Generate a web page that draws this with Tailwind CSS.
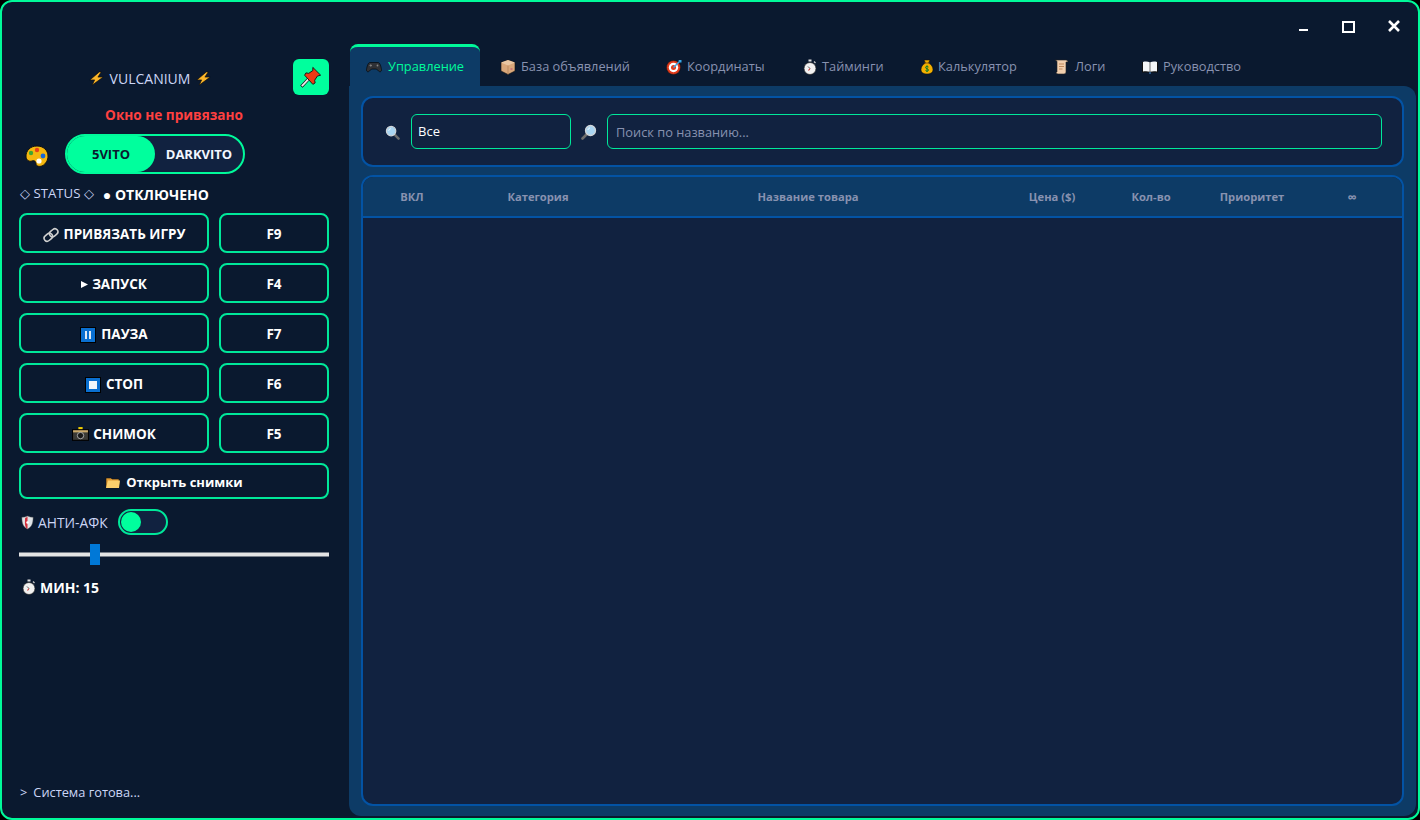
<!doctype html>
<html lang="ru">
<head>
  <meta charset="utf-8" />
  <title>Vulcanium</title>
  <script src="https://cdn.jsdelivr.net/npm/@tailwindcss/browser@4"></script>
</head>
<body class="bg-black">
  <svg class="hidden">
    <symbol id="i-bolt" viewBox="0 0 16 16"><path d="M11 1 1 9.500h5L3.500 15 15 6.500H9.500L13 1z" fill="#fbb62a" stroke="#1a1208" stroke-width=".7"/></symbol>
    <symbol id="i-pin" viewBox="0 0 24 24"><path d="M1.500 22.500 9 14.500" stroke="#111" stroke-width="3.400"/><path d="M2 22 9 14.500" stroke="#ececec" stroke-width="2"/><path d="M14 1.500l8.500 8.500-3.500 1-3 4.500.5 3-2.500 1.500L5 10l1.500-2.500 3 .5L14 5z" fill="#ee3a14" stroke="#111" stroke-width="1"/></symbol>
    <symbol id="i-palette" viewBox="0 0 24 24"><path d="M12 2C5 2 1 7 1 12c0 4 3 6 6 5 3-1 4 1 4 3 0 2 3 3 6 2 4-2 6-6 6-10C23 6 18 2 12 2z" fill="#f5b70f" stroke="#111"/><circle cx="12" cy="6" r="2.200" fill="#e8401c"/><circle cx="6" cy="9" r="2.200" fill="#3fa535"/><circle cx="18" cy="12" r="2.400" fill="#1668d8"/><circle cx="14" cy="17" r="2.600" fill="#fff"/></symbol>
    <symbol id="i-link" viewBox="0 0 16 16"><g fill="none" stroke="#cfcfcf" stroke-width="1.600" transform="rotate(-40 8 8)"><rect x="0" y="5" width="9" height="6" rx="3"/><rect x="7" y="5" width="9" height="6" rx="3"/></g></symbol>
    <symbol id="i-pause" viewBox="0 0 16 16"><rect x=".5" y=".5" width="15" height="15" fill="#0a6fd0" stroke="#000"/><path d="M5 4h2v8H5zM9 4h2v8H9z" fill="#dfeaf5"/></symbol>
    <symbol id="i-stop" viewBox="0 0 16 16"><rect x=".5" y=".5" width="15" height="15" fill="#0a6fd0" stroke="#000"/><rect x="4" y="4" width="8" height="8" fill="#f2f6fa"/></symbol>
    <symbol id="i-camera" viewBox="0 0 16 16"><rect x="6" y="1" width="4" height="3" fill="#f2ce00"/><rect x=".5" y="3.500" width="15" height="10" fill="#3b3a36" stroke="#000"/><rect x="1" y="4" width="14" height="2" fill="#c9a86a"/><circle cx="8" cy="9" r="3" fill="#1a1a1a" stroke="#bbb" stroke-width=".8"/></symbol>
    <symbol id="i-folder" viewBox="0 0 16 16"><path d="M1 3h5l1 1h7v9H1z" fill="#e09a32" stroke="#111" stroke-width=".6"/><path d="M1 13 3 5.500h12L14 13z" fill="#fdd06c"/></symbol>
    <symbol id="i-shield" viewBox="0 0 16 16"><path d="M8 1c2 1 4 1.500 6 1.500 0 6-1 10-6 12.500-5-2.500-6-6.500-6-12.500C4 2.500 6 2 8 1z" fill="#dfe3e6" stroke="#555" stroke-width=".5"/><path d="M8 1.500V15C5 13.500 5 9 5.500 3 6.500 3 7 2 8 1.500z" fill="#d42e3b"/><circle cx="8" cy="8" r="1.300" fill="#fff"/></symbol>
    <symbol id="i-watch" viewBox="0 0 16 16"><rect x="6.500" y=".5" width="3" height="2" fill="#ddd"/><path d="M12 2.500l1.500 1.500" stroke="#ccc" stroke-width="1.300"/><circle cx="8" cy="9.500" r="6" fill="#f1f1f1" stroke="#222" stroke-width=".7"/><path d="M8 9.500 6.500 11.500" stroke="#d0302b" stroke-width="1.100"/><path d="M6 7.500 8 9.500" stroke="#333" stroke-width=".8"/></symbol>
    <symbol id="i-glass-l" viewBox="0 0 16 16"><path d="M10 10l4.500 4.500" stroke="#6d6d6d" stroke-width="2.600" stroke-linecap="round"/><circle cx="6.500" cy="6.500" r="5" fill="#a9d5f2" stroke="#cfd4d8" stroke-width="1.300"/><path d="M4 6c0-1 1-2 2-2" stroke="#fff" fill="none"/></symbol>
    <symbol id="i-glass-r" viewBox="0 0 16 16"><path d="M6 10l-4.500 4.500" stroke="#6d6d6d" stroke-width="2.600" stroke-linecap="round"/><circle cx="9.500" cy="6.500" r="5" fill="#a9d5f2" stroke="#cfd4d8" stroke-width="1.300"/><path d="M7 6c0-1 1-2 2-2" stroke="#fff" fill="none"/></symbol>
    <symbol id="i-pad" viewBox="0 0 16 16"><path d="M4 3.500h8c2 0 3 4 3.500 7 .3 2-1.500 3-3 1.500L10.500 10h-5L3.500 12c-1.500 1.500-3.300.5-3-1.500.5-3 1.500-7 3.500-7z" fill="#2f3136" stroke="#000" stroke-width=".6"/><circle cx="11.500" cy="6.500" r=".9" fill="#888"/><path d="M3.500 6.500h2.500M4.750 5.250v2.500" stroke="#888" stroke-width=".8"/></symbol>
    <symbol id="i-box" viewBox="0 0 16 16"><path d="M8 1l7 2.500V12l-7 3.500L1 12V3.500z" fill="#d9a77a" stroke="#111" stroke-width=".6"/><path d="M1 3.500 8 6.500 15 3.500 8 1z" fill="#e9c6a2"/><path d="M8 6.500v9" stroke="#a87b52" stroke-width=".6"/><rect x="10.500" y="9" width="2" height="2" fill="#c77"/></symbol>
    <symbol id="i-target" viewBox="0 0 16 16"><circle cx="7.500" cy="8.500" r="7" fill="#e33b1c" stroke="#111" stroke-width=".5"/><circle cx="7.500" cy="8.500" r="4.700" fill="#fff"/><circle cx="7.500" cy="8.500" r="2.500" fill="#e33b1c"/><path d="M7.500 8.500 14 2" stroke="#37a8e8" stroke-width="1.500"/><path d="M12.500 1h3v2.500h-2z" fill="#37a8e8"/></symbol>
    <symbol id="i-bag" viewBox="0 0 16 16"><path d="M5 1h6l-1.500 3c3 1.500 4.500 4 4.500 6.500 0 3-2.500 4.500-6 4.500s-6-1.500-6-4.500C2 8 3.500 5.500 6.500 4z" fill="#f4b000" stroke="#111" stroke-width=".6"/><rect x="5.500" y="3.500" width="5" height="1" fill="#8a5a10"/><path d="M9.500 8c-.5-1-3-1-3 .5s3 1 3 2.500-2.500 1.500-3 .5M8 6.500v6.500" fill="none" stroke="#0c7a2a" stroke-width="1"/></symbol>
    <symbol id="i-scroll" viewBox="0 0 16 16"><path d="M1 1h11c1 0 2 1 2 2h-2v10c0 1-1 2-2 2H4c-1 0-2-1-2-2h1V3C3 2 2 1 1 1z" fill="#f2cfae" stroke="#222" stroke-width=".6"/><path d="M5 5h5M5 7.500h5M5 10h3.500" stroke="#c08a5c" stroke-width="1.100"/></symbol>
    <symbol id="i-book" viewBox="0 0 16 16"><path d="M0 3h16v10.500H0z" fill="#111"/><path d="M1 3c2-.6 5-.6 6.700.3v9.500C6 12 3 12 1 12.500zM15 3c-2-.6-5-.6-6.700.3v9.500c1.700-.8 4.700-.8 6.700-.3z" fill="#f4f6f8"/><path d="M7 13.500h2v1H7z" fill="#4a90d9"/></symbol>
  </svg>

  <div class="w-[1420px] h-[820px] border-2 border-[#00fa9a] rounded-[12px] bg-[#0a192f] overflow-hidden flex font-['Open_Sans','Noto_Sans',sans-serif] text-white text-[13px]">

    <!-- sidebar -->
    <aside class="w-[347px] shrink-0 pl-[17px] pr-[20px] pt-[57px] pb-[17px] flex flex-col">
      <div class="flex items-center gap-3 h-9">
        <div class="flex-1 flex items-center justify-center gap-[6px] pt-[2px] text-[#ccd6f6] text-[14px]">
          <svg class="w-[15px] h-[15px]"><use href="#i-bolt"/></svg>
          <span>VULCANIUM</span>
          <svg class="w-[15px] h-[15px]"><use href="#i-bolt"/></svg>
        </div>
        <button class="w-9 h-9 rounded-md bg-[#00ff9d] flex items-center justify-center">
          <svg class="w-[22px] h-[22px]"><use href="#i-pin"/></svg>
        </button>
      </div>

      <div class="mt-[11px] h-[18px] leading-[18px] text-center font-bold text-[#ff4040] text-[13.6px]">Окно не привязано</div>

      <div class="mt-[10px] flex items-center h-10">
        <svg class="ml-[6px] mt-[4px] w-[24px] h-[24px]"><use href="#i-palette"/></svg>
        <div class="ml-4 w-[180px] h-10 border-2 border-[#00fa9a] rounded-full bg-[#112240] flex font-bold text-[13px]">
          <span class="w-[88px] pt-px rounded-full bg-[#00ff9d] text-[#0a192f] flex items-center justify-center">5VITO</span>
          <span class="flex-1 pt-px flex items-center justify-center text-[#f2f6ff]">DARKVITO</span>
        </div>
      </div>

      <div class="mt-[11px] h-[18px] flex items-center pl-px text-[#ccd6f6] text-[13.2px]">
        <span>◇ STATUS ◇</span>
        <span class="ml-[9px] pt-px text-white font-bold text-[14px]">● ОТКЛЮЧЕНО</span>
      </div>

      <div class="mt-[10px] grid grid-cols-[190px_110px] gap-x-[10px] gap-y-[10px] font-bold text-[13.5px]">
        <button class="h-10 pt-[3px] rounded-lg border-2 border-[#00e89a] flex items-center justify-center gap-[5px]"><svg class="w-[16px] h-[16px]"><use href="#i-link"/></svg>ПРИВЯЗАТЬ ИГРУ</button>
        <button class="h-10 pt-[3px] rounded-lg border-2 border-[#00e89a]">F9</button>
        <button class="h-10 pt-[3px] rounded-lg border-2 border-[#00e89a] flex items-center justify-center gap-[4px]"><svg class="w-[7px] h-[7px]" viewBox="0 0 8 8"><path d="M0 0l8 4-8 4z" fill="#fff"/></svg>ЗАПУСК</button>
        <button class="h-10 pt-[3px] rounded-lg border-2 border-[#00e89a]">F4</button>
        <button class="h-10 pt-[3px] rounded-lg border-2 border-[#00e89a] flex items-center justify-center gap-[5px]"><svg class="w-[16px] h-[16px]"><use href="#i-pause"/></svg>ПАУЗА</button>
        <button class="h-10 pt-[3px] rounded-lg border-2 border-[#00e89a]">F7</button>
        <button class="h-10 pt-[3px] rounded-lg border-2 border-[#00e89a] flex items-center justify-center gap-[5px]"><svg class="w-[16px] h-[16px]"><use href="#i-stop"/></svg>СТОП</button>
        <button class="h-10 pt-[3px] rounded-lg border-2 border-[#00e89a]">F6</button>
        <button class="h-10 pt-[3px] rounded-lg border-2 border-[#00e89a] flex items-center justify-center gap-[4px]"><svg class="w-[17px] h-[17px]"><use href="#i-camera"/></svg>СНИМОК</button>
        <button class="h-10 pt-[3px] rounded-lg border-2 border-[#00e89a]">F5</button>
        <button class="col-span-2 h-9 pt-[3px] rounded-lg border-2 border-[#00e89a] flex items-center justify-center gap-[5px] text-[13px]"><svg class="w-[16px] h-[16px]"><use href="#i-folder"/></svg>Открыть снимки</button>
      </div>

      <div class="mt-[10px] h-[26px] flex items-center text-[#ccd6f6] text-[13.8px]">
        <svg class="ml-px w-[15px] h-[15px]"><use href="#i-shield"/></svg>
        <span class="ml-[3px] pt-[3px]">АНТИ-АФК</span>
        <div class="ml-[10px] w-[50px] h-[26px] rounded-full border-2 border-[#00e89a] bg-[#112240] p-px">
          <div class="w-5 h-5 rounded-full bg-[#00ff9d]"></div>
        </div>
      </div>

      <div class="relative mt-[9px] h-[21px] flex items-center">
        <div class="w-[310px] h-[4px] bg-[#e4e4e4] -translate-y-[0.5px]"></div>
        <div class="absolute left-[71px] top-0 w-[10px] h-[21px] bg-[#0078d7]"></div>
      </div>

      <div class="mt-[13px] h-[18px] flex items-center gap-[3px] pl-[2px] font-bold text-[14px]">
        <svg class="w-[16px] h-[16px]"><use href="#i-watch"/></svg>
        <span>МИН: 15</span>
      </div>

      <div class="mt-auto h-[18px] leading-[18px] pl-px text-[#ccd6f6] text-[12.8px]">&gt;<span class="ml-[6px]">Система готова...</span></div>
    </aside>

    <!-- right column -->
    <div class="flex-1 min-w-0 pr-[2px] pb-[2px] flex flex-col">
      <div class="h-[42px] shrink-0 flex items-center relative">
        <span class="absolute left-[950px] top-[27px] w-[9px] h-[2px] bg-white"></span>
        <span class="absolute left-[993px] top-[19px] w-[13px] h-[12px] border-2 border-white"></span>
        <svg class="absolute left-[1039px] top-[18px] w-[12px] h-[12px]" viewBox="0 0 12 12"><path d="M1 1l10 10M11 1 1 11" stroke="#fff" stroke-width="2.600"/></svg>
      </div>

      <nav class="h-[42px] shrink-0 flex gap-[4px] pl-px text-[12.8px] text-[#8892b0]">
        <div class="w-[130px] pt-[1px] border-t-[3px] border-[#00fa9a] rounded-t-lg bg-[#0d3b66] text-[#00fa9a] flex items-center pl-4 gap-[6px]"><svg class="w-4 h-4"><use href="#i-pad"/></svg>Управление</div>
        <div class="w-[162px] pt-[3px] flex items-center pl-4 gap-[5px]"><svg class="w-4 h-4"><use href="#i-box"/></svg>База объявлений</div>
        <div class="w-[132px] pt-[3px] flex items-center pl-4 gap-[5px]"><svg class="w-4 h-4"><use href="#i-target"/></svg>Координаты</div>
        <div class="w-[113px] pt-[3px] flex items-center pl-4 gap-[4px]"><svg class="w-4 h-4"><use href="#i-watch"/></svg>Тайминги</div>
        <div class="w-[131px] pt-[3px] flex items-center pl-4 gap-[3px]"><svg class="w-4 h-4"><use href="#i-bag"/></svg>Калькулятор</div>
        <div class="w-[84px] pt-[3px] flex items-center pl-4 gap-[5px]"><svg class="w-4 h-4"><use href="#i-scroll"/></svg>Логи</div>
        <div class="w-[130px] pt-[3px] flex items-center pl-4 gap-[5px]"><svg class="w-4 h-4"><use href="#i-book"/></svg>Руководство</div>
      </nav>

      <main class="flex-1 min-h-0 bg-[#0d3b66] rounded-b-xl rounded-tr-xl px-3 pt-[10px] pb-[10px] flex flex-col gap-2">
        <section class="h-[71px] shrink-0 rounded-xl border-2 border-[#0353a4] bg-[#112240] flex items-center pl-[22px] pr-5">
          <svg class="w-[15px] h-[15px] mt-px"><use href="#i-glass-l"/></svg>
          <div class="ml-[11px] w-[160px] h-[35px] pt-px rounded-md border border-[#00e89a] bg-[#112240] flex items-center pl-[6px] text-[13px]">Все</div>
          <svg class="ml-[10px] w-[16px] h-[16px] mt-px"><use href="#i-glass-r"/></svg>
          <input class="ml-[10px] flex-1 h-[35px] pt-px rounded-md border border-[#00e89a] bg-[#112240] pl-2 text-[12.8px] placeholder-[#8892b0] outline-none" placeholder="Поиск по названию..." />
        </section>

        <section class="flex-1 min-h-0 rounded-xl border-2 border-[#0353a4] bg-[#112240] overflow-hidden">
          <div class="h-[41px] pt-[2px] border-b-2 border-[#0353a4] bg-[#0d3b66] grid grid-cols-[98px_154px_386px_102px_96px_106px_94px] items-center text-center font-bold text-[11.2px] text-[#8892b0]">
            <span>ВКЛ</span>
            <span>Категория</span>
            <span>Название товара</span>
            <span>Цена ($)</span>
            <span>Кол-во</span>
            <span>Приоритет</span>
            <span class="text-[13px]">∞</span>
          </div>
        </section>
      </main>
    </div>
  </div>
</body>
</html>
